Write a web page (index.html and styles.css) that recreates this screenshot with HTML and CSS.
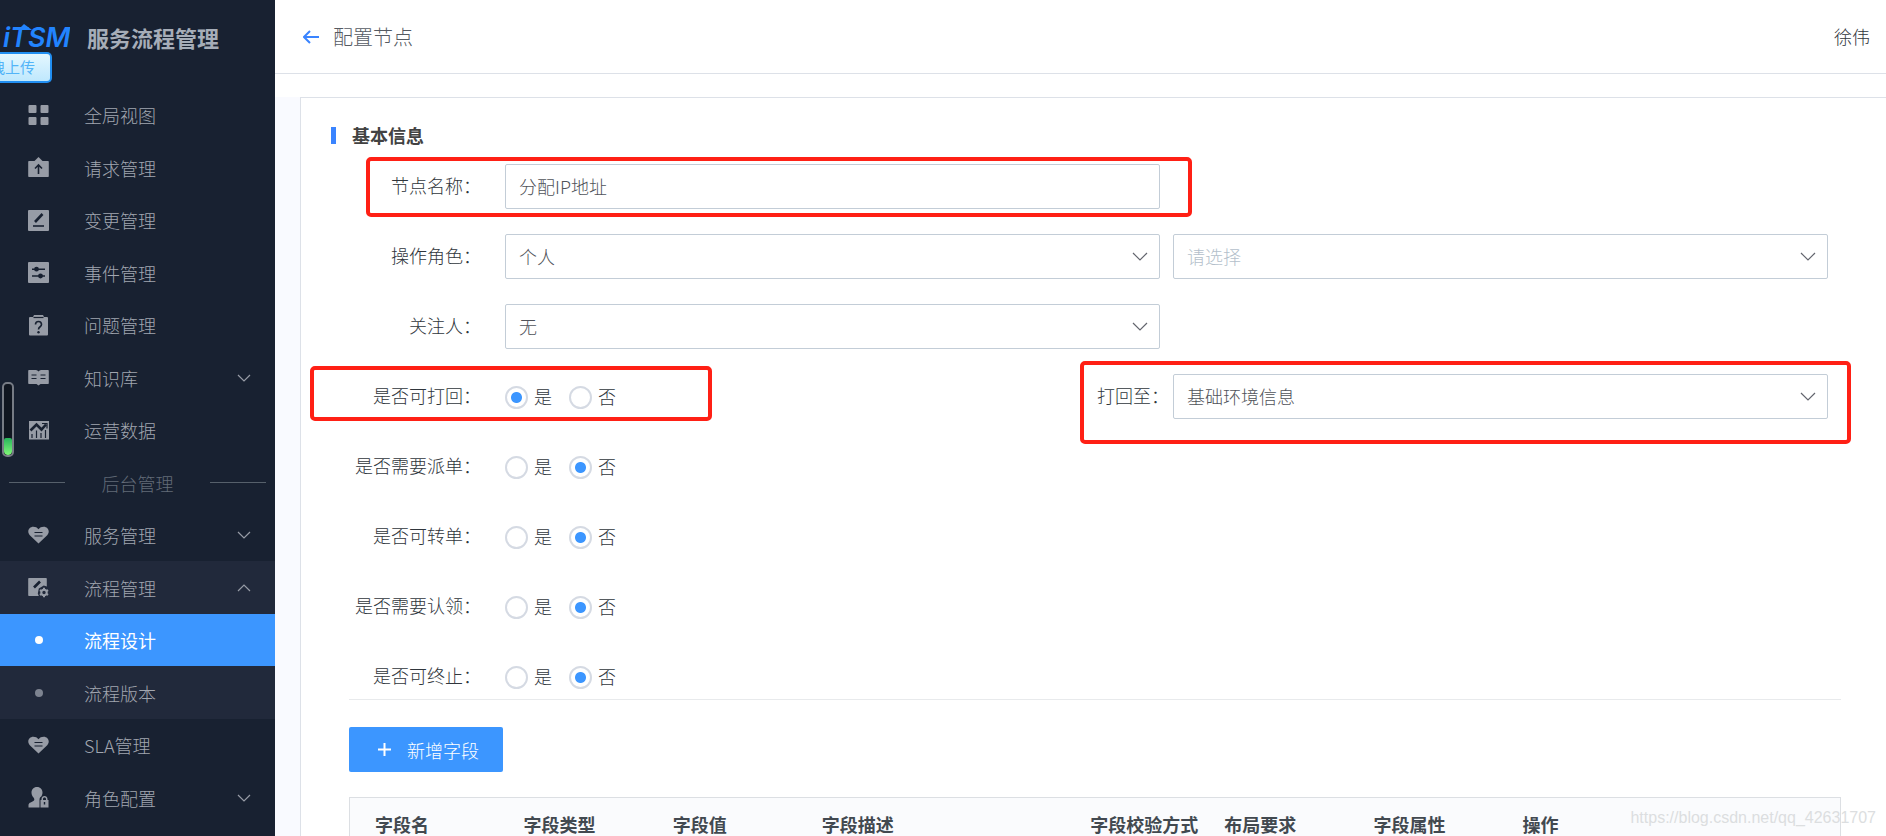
FILE: index.html
```html
<!DOCTYPE html>
<html lang="zh-CN">
<head>
<meta charset="utf-8">
<title>服务流程管理</title>
<link rel="stylesheet" href="styles.css">
</head>
<body>
<div class="app">
  <aside class="sidebar">
    <div class="brand">
      <svg class="logo" viewBox="0 0 70 32" role="img" aria-label="iTSM">
        <text class="logo-text" x="3" y="26">iTSM</text>
        <path d="M18 9L24 3L32 9Z"/>
      </svg>
      <span class="brand-name">服务流程管理</span>
    </div>
    <button class="upload" type="button">拖拽上传</button>
    <div class="gauge"><div class="gauge-fill"></div></div>
    <nav class="nav">
      <a class="nav-item" href="#"><svg class="icon" viewBox="0 0 21 21"><path d="M1.500 0h6a1 1 0 0 1 1 1v6a1 1 0 0 1-1 1h-6a1 1 0 0 1-1-1V1a1 1 0 0 1 1-1zM13.500 0h6a1 1 0 0 1 1 1v6a1 1 0 0 1-1 1h-6a1 1 0 0 1-1-1V1a1 1 0 0 1 1-1zM1.500 12h6a1 1 0 0 1 1 1v6a1 1 0 0 1-1 1h-6a1 1 0 0 1-1-1v-6a1 1 0 0 1 1-1zM13.500 12h6a1 1 0 0 1 1 1v6a1 1 0 0 1-1 1h-6a1 1 0 0 1-1-1v-6a1 1 0 0 1 1-1z"/></svg><span>全局视图</span></a>
      <a class="nav-item" href="#"><svg class="icon" viewBox="0 0 21 21"><path d="M1 4h5.500L10.500 0l4 4H20a.8.8 0 0 1 .8.8v14.400a.8.8 0 0 1-.8.8H1a.8.8 0 0 1-.8-.8V4.800A.8.800 0 0 1 1 4z"/><path class="cut" d="M10.500 17V8M7 11.500L10.500 8l3.500 3.500"/></svg><span>请求管理</span></a>
      <a class="nav-item" href="#"><svg class="icon" viewBox="0 0 21 21"><rect width="21" height="21" rx="1"/><path class="cut" d="M5 16h11"/><path class="cut bold" d="M7 12l7.500-8"/></svg><span>变更管理</span></a>
      <a class="nav-item" href="#"><svg class="icon" viewBox="0 0 21 21"><rect width="21" height="21" rx="1"/><path class="cut" d="M4 7.200h13M4 14h13"/><circle class="hole" cx="8.500" cy="7.200" r="2.400"/><circle class="hole" cx="12.500" cy="14" r="2.400"/></svg><span>事件管理</span></a>
      <a class="nav-item" href="#"><svg class="icon" viewBox="0 0 21 21"><path d="M2 2h3l1-2h9l1 2h3a1 1 0 0 1 1 1v16.500a1 1 0 0 1-1 1H2a1 1 0 0 1-1-1V3a1 1 0 0 1 1-1z"/><path class="cut thin" d="M5.500 2.500h10"/><path class="cut" d="M7.500 9.500c0-4 6-4 6 0 0 2.500-3 2-3 5"/><circle class="hole" cx="10.500" cy="17.300" r="1.200"/></svg><span>问题管理</span></a>
      <a class="nav-item" href="#"><svg class="icon" viewBox="0 0 21 21"><path d="M1 3h7q1.500 0 2.500 1.500Q11.500 3 13 3h7q.8 0 .8.800v12.400q0 .8-.8.800h-7.500l-2 1.500L8.500 17H1q-.8 0-.8-.8V3.800Q.2 3 1 3z"/><path class="cut thin" d="M3.500 8h5M3.500 11.500h5M12.500 8h5M12.500 11.500h5"/></svg><span>知识库</span><svg class="chevron" viewBox="0 0 14 8"><path d="M1 1l6 6 6-6"/></svg></a>
      <a class="nav-item" href="#"><svg class="icon" viewBox="0 0 21 21"><path d="M1 1h20v18.500H1z"/><path class="cut bold" d="M2.500 10.500l6-6 5 5 4.500-5"/><path class="cut thin" d="M14 3.500h5v5M4 18v-4M8.500 18V10.500M13 18v-5M17.500 18V10"/></svg><span>运营数据</span></a>
      <div class="nav-divider"><span>后台管理</span></div>
      <a class="nav-item" href="#"><svg class="icon" viewBox="0 0 21 21"><path d="M10.500 18.500L1.800 10.300C-1.500 6.500 1 1.800 5.300 1.800c2.200 0 4 .8 5.200 2.500 1.200-1.700 3-2.500 5.200-2.500 4.300 0 6.800 4.700 3.500 8.500z"/><path class="cut thin" d="M6.500 7.500h8M6.500 11h8"/></svg><span>服务管理</span><svg class="chevron" viewBox="0 0 14 8"><path d="M1 1l6 6 6-6"/></svg></a>
      <a class="nav-item open" href="#"><svg class="icon" viewBox="0 0 21 21"><path d="M1 1h17a.8.8 0 0 1 .8.800V9.500l-3-1-5 3-1 5 1 2.500H1a.8.8 0 0 1-.8-.8V1.800A.8.800 0 0 1 1 1z"/><path class="cut bold" d="M6 10.500L12 4.500"/><circle class="gear" cx="16" cy="15.500" r="2.700"/><path class="teeth" d="M16 10.800v1.500M16 18.700v1.500M11.900 13.100l1.400.800M18.700 17.100l1.400.800M11.900 17.900l1.400-.8M18.700 13.900l1.400-.8"/></svg><span>流程管理</span><svg class="chevron" viewBox="0 0 14 8"><path d="M1 7l6-6 6 6"/></svg></a>
      <a class="nav-item active" href="#"><span class="dot"></span><span>流程设计</span></a>
      <a class="nav-item open" href="#"><span class="dot"></span><span>流程版本</span></a>
      <a class="nav-item" href="#"><svg class="icon" viewBox="0 0 21 21"><path d="M10.500 18.500L1.800 10.300C-1.500 6.500 1 1.800 5.300 1.800c2.200 0 4 .8 5.200 2.500 1.200-1.700 3-2.500 5.200-2.500 4.300 0 6.800 4.700 3.500 8.500z"/><path class="cut thin" d="M6.500 7.500h8M6.500 11h8"/></svg><span>SLA管理</span></a>
      <a class="nav-item" href="#"><svg class="icon" viewBox="0 0 21 21"><path d="M9 0c3.500 0 5.500 2.500 5.500 5.500 0 1.500-.4 2.600-1 3.700-1.500 1-2 2-2 3.800v7.500H.5v-2.500c0-2.500 4-3 5.500-4.500.7-.8.200-2-.5-3C4.300 9.300 3.500 7.500 3.500 5.500 3.500 2.500 5.500 0 9 0z"/><path d="M12.500 13h1v-1c0-4 6-4 6 0v1h1v7.500h-8z"/><path class="hole" d="M15 13v-1c0-2 3-2 3 0v1zM15.800 15h1.400v2.500h-1.400z"/></svg><span>角色配置</span><svg class="chevron" viewBox="0 0 14 8"><path d="M1 1l6 6 6-6"/></svg></a>
    </nav>
  </aside>

  <div class="page">
    <header class="topbar">
      <a class="back" href="#" aria-label="返回"><svg class="back-icon" viewBox="0 0 16 14"><path d="M16 7H1M7 1L1 7l6 6"/></svg></a>
      <h1 class="page-title">配置节点</h1>
      <span class="user">徐伟</span>
    </header>
    <main class="content">
      <section class="card">
        <h2 class="section-title">基本信息</h2>
        <form class="form">
          <div class="row">
            <label class="label" for="name">节点名称：</label>
            <input class="control" id="name" type="text" value="分配IP地址">
            <div class="mark mark-name"></div>
          </div>
          <div class="row">
            <label class="label" for="role">操作角色：</label>
            <div class="select"><select class="control" id="role"><option>个人</option></select><svg class="arrow" viewBox="0 0 16 9"><path d="M1 1l7 7 7-7"/></svg></div>
            <div class="select"><select class="control empty" aria-label="请选择"><option>请选择</option></select><svg class="arrow" viewBox="0 0 16 9"><path d="M1 1l7 7 7-7"/></svg></div>
          </div>
          <div class="row">
            <label class="label" for="follower">关注人：</label>
            <div class="select"><select class="control" id="follower"><option>无</option></select><svg class="arrow" viewBox="0 0 16 9"><path d="M1 1l7 7 7-7"/></svg></div>
          </div>
          <div class="row">
            <span class="label" id="l-back">是否可打回：</span>
            <div class="cell">
              <div class="radios" role="radiogroup" aria-labelledby="l-back">
                <label class="radio"><input type="radio" name="back" checked><span>是</span></label>
                <label class="radio"><input type="radio" name="back"><span>否</span></label>
              </div>
              <label class="side-label" for="target">打回至：</label>
            </div>
            <div class="select"><select class="control" id="target"><option>基础环境信息</option></select><svg class="arrow" viewBox="0 0 16 9"><path d="M1 1l7 7 7-7"/></svg></div>
            <div class="mark mark-back"></div>
            <div class="mark mark-target"></div>
          </div>
          <div class="row">
            <span class="label" id="l-dispatch">是否需要派单：</span>
            <div class="radios" role="radiogroup" aria-labelledby="l-dispatch">
              <label class="radio"><input type="radio" name="dispatch"><span>是</span></label>
              <label class="radio"><input type="radio" name="dispatch" checked><span>否</span></label>
            </div>
          </div>
          <div class="row">
            <span class="label" id="l-transfer">是否可转单：</span>
            <div class="radios" role="radiogroup" aria-labelledby="l-transfer">
              <label class="radio"><input type="radio" name="transfer"><span>是</span></label>
              <label class="radio"><input type="radio" name="transfer" checked><span>否</span></label>
            </div>
          </div>
          <div class="row">
            <span class="label" id="l-claim">是否需要认领：</span>
            <div class="radios" role="radiogroup" aria-labelledby="l-claim">
              <label class="radio"><input type="radio" name="claim"><span>是</span></label>
              <label class="radio"><input type="radio" name="claim" checked><span>否</span></label>
            </div>
          </div>
          <div class="row">
            <span class="label" id="l-stop">是否可终止：</span>
            <div class="radios" role="radiogroup" aria-labelledby="l-stop">
              <label class="radio"><input type="radio" name="stop"><span>是</span></label>
              <label class="radio"><input type="radio" name="stop" checked><span>否</span></label>
            </div>
          </div>
        </form>
        <div class="fields">
          <button class="add" type="button"><svg class="plus" viewBox="0 0 13 13"><path d="M0 6.500h13M6.500 0v13"/></svg>新增字段</button>
          <table class="table">
            <colgroup><col class="c-10"><col class="c-10"><col class="c-10"><col class="c-18"><col class="c-9"><col class="c-10"><col class="c-10"><col></colgroup>
            <thead>
              <tr><th>字段名</th><th>字段类型</th><th>字段值</th><th>字段描述</th><th>字段校验方式</th><th>布局要求</th><th>字段属性</th><th>操作</th></tr>
            </thead>
          </table>
        </div>
      </section>
    </main>
  </div>
  <div class="watermark">https://blog.csdn.net/qq_42631707</div>
</div>
</body>
</html>
```
FILE: styles.css
```css
* { box-sizing: border-box; }
body {
  margin: 0;
  font: 300 18px/26px "Noto Sans CJK SC", sans-serif;
  color: #30363c;
  background: #fff;
}
h1, h2 { margin: 0; }
a { color: inherit; text-decoration: none; }
button, input, select { font: inherit; color: inherit; }

.app { display: flex; height: 100vh; overflow: hidden; position: relative; }

.sidebar { position: relative; flex: none; width: 275px; background: #182131; color: #a1a6b0; }
.brand { display: flex; align-items: center; gap: 17px; height: 89px; padding-bottom: 16px; }
.logo { width: 70px; height: 32px; fill: #2284ff; }
.logo-text { font: italic 600 27px Inter, sans-serif; }
.brand-name { font-size: 22px; font-weight: 700; color: #a6adb8; }
.upload {
  position: absolute; left: 0; top: 52px;
  display: flex; justify-content: flex-end; align-items: center;
  width: 52px; height: 31px; padding: 0 15px 2px 0; overflow: hidden;
  border: 2px solid #218ff2; border-left: 0; border-radius: 0 5px 5px 0;
  background: linear-gradient(#e4f7ff, #bfe8fd);
  color: #52b4f8; font-size: 15px; font-weight: 400; white-space: nowrap;
}
.gauge {
  position: absolute; left: 2px; top: 382px;
  display: flex; align-items: flex-end;
  width: 12px; height: 75px; overflow: hidden;
  border: 2px solid #777c85; border-radius: 5px; background: #101620;
}
.gauge-fill { width: 100%; height: 17px; border-radius: 2px 2px 4px 4px; background: linear-gradient(#28b45c, #80f878); }

.nav-item, .nav-divider { display: flex; align-items: center; height: 52px; }
.nav-item:nth-child(even), .nav-divider:nth-child(even) { height: 53px; }
.nav-item { padding: 0 24px 0 28px; gap: 35px; }
.nav-item.open { background: #21293b; }
.nav-item.active { background: #3c96ff; color: #fff; font-weight: 400; }
.icon { flex: none; width: 21px; height: 21px; fill: #979ca6; }
.icon .cut { fill: none; stroke: #182131; stroke-width: 1.600; }
.icon .bold { stroke-width: 2.600; }
.icon .thin { stroke-width: 1.200; }
.icon .hole { fill: #182131; }
.icon .gear { fill: none; stroke: #979ca6; stroke-width: 2; }
.icon .teeth { fill: none; stroke: #979ca6; stroke-width: 2; }
.chevron { width: 14px; height: 8px; margin-left: auto; fill: none; stroke: #979ca6; stroke-width: 1.200; }
.dot { width: 8px; height: 8px; margin: 0 6px 0 7px; border-radius: 50%; background: #7d8390; }
.active .dot { background: #fff; }
.nav-divider { justify-content: space-between; padding: 0 9px; color: #626b78; }
.nav-divider::before, .nav-divider::after { content: ""; width: 56px; height: 1px; background: #56606b; }

.page { flex: 1; min-width: 0; display: flex; flex-direction: column; }
.topbar { display: flex; align-items: center; height: 74px; flex: none; padding: 0 16px 0 28px; border-bottom: 1px solid #dde1e8; }
.back { display: flex; margin-right: 14px; }
.back-icon { width: 16px; height: 14px; fill: none; stroke: #3a84ff; stroke-width: 2; }
.page-title { font-size: 20px; font-weight: 300; color: #555a62; }
.user { margin-left: auto; padding-bottom: 2px; }
.content { flex: 1; min-height: 0; margin-top: 23px; padding-left: 25px; background: #f9faff; }
.card { min-height: 100%; padding: 24px 45px 32px 30px; border: 1px solid #dde1e8; border-right: 0; background: #fff; }
.section-title { display: flex; align-items: center; gap: 16px; font-size: 18px; line-height: 26px; color: #424242; }
.section-title::before { content: ""; width: 5px; height: 17px; background: #3a84ff; }

.form { display: flex; flex-direction: column; gap: 25px; margin: 16px 0 0 18px; border-bottom: 1px solid #e8eaec; }
.row {
  position: relative;
  display: grid; grid-template-columns: 143px 1fr 1fr; align-items: center;
  height: 45px; margin-right: 13px;
  column-gap: 13px;
}
.label { margin-right: 11px; padding-bottom: 3px; text-align: right; white-space: nowrap; }
.control {
  width: 100%; height: 45px; padding: 0 13px 2px;
  border: 1px solid #c3cdd7; border-radius: 2px; outline: 0;
  background: #fff; color: #50535a; appearance: none;
}
.control.empty { color: #b4bfcb; }
.select { position: relative; }
.arrow { position: absolute; right: 12px; top: 18px; width: 16px; height: 9px; fill: none; stroke: #63656e; stroke-width: 1.200; pointer-events: none; }
.cell { display: flex; align-items: center; justify-content: space-between; }
.side-label { margin-right: -9px; padding-bottom: 3px; }
.radios { display: flex; gap: 17px; padding-top: 1px; }
.radio { display: flex; align-items: center; gap: 6px; }
.radio span { padding-bottom: 3px; }
.radio input {
  appearance: none; width: 23px; height: 23px; margin: 0;
  border: 2px solid #d5dae3; border-radius: 50%; background: #fff;
}
.radio input:checked { background: radial-gradient(circle, #3c96ff 5px, #fff 6px); }

.mark { position: absolute; border: 4px solid #ff2015; border-radius: 5px; pointer-events: none; }
.mark-name { left: 17px; right: 636px; top: -7px; bottom: -8px; }
.mark-back { left: -39px; width: 402px; top: -8px; bottom: -2px; }
.mark-target { left: calc(50% - 9px); right: -23px; top: -13px; bottom: -25px; }

.fields { margin-left: 18px; }
.add {
  display: flex; align-items: center; justify-content: center; gap: 16px;
  width: 154px; height: 45px; margin: 27px 0 25px; padding: 0 0 0 5px;
  border: 0; border-radius: 2px; background: #3c96ff; color: #fff;
}
.plus { width: 13px; height: 13px; fill: none; stroke: #fff; stroke-width: 2; }
.table { width: 100%; table-layout: fixed; border-collapse: collapse; border: 1px solid #dcdfe3; background: #fafbfd; }
.table th { height: 53px; padding: 0 0 0 25px; text-align: left; font-weight: 700; color: #424950; white-space: nowrap; }
.c-9 { width: 9%; }
.c-10 { width: 10%; }
.c-18 { width: 18%; }
.watermark { position: absolute; right: 10px; bottom: 5px; font: 16px/26px "Liberation Sans", sans-serif; color: #dcdee0; }
```
